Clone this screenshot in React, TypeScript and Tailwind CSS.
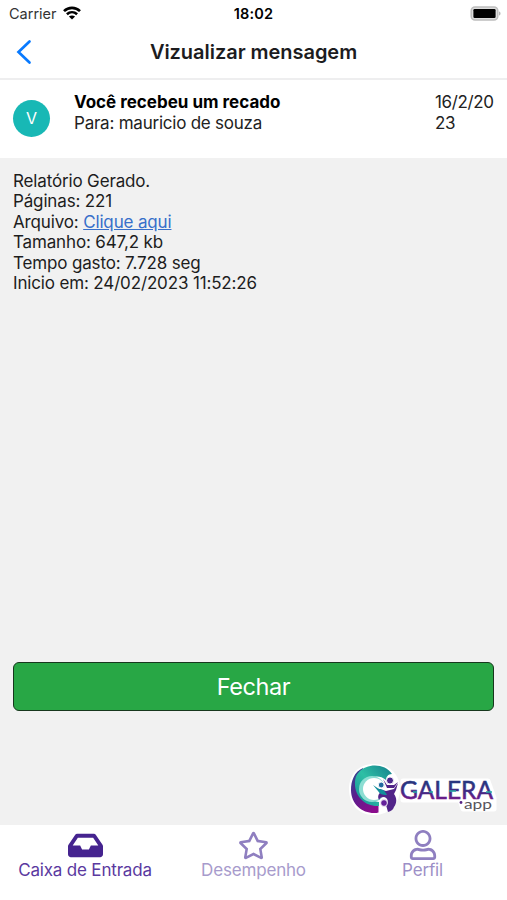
import { FaInbox, FaRegStar, FaRegUser } from "react-icons/fa";

function StatusBar() {
  return (
    <div className="grid h-[28px] shrink-0 grid-cols-3 items-center text-[14.5px] leading-none">
      <div className="flex items-center gap-[6px] pl-[9px]">
        <span className="text-[#333]">Carrier</span>
        <svg className="-mt-[2px]" width="18" height="14" viewBox="0 0 18 14" fill="none" stroke="#000" strokeWidth="2.6">
          <path d="M1 5.2C5.5.7 12.5.7 17 5.2" />
          <path d="M3.9 8.3c3-2.8 7.2-2.8 10.2 0" />
          <path d="M9 13.5 5.9 10.6c1.8-1.5 4.4-1.5 6.2 0z" fill="#000" stroke="none" />
        </svg>
      </div>
      <span className="text-center text-[14.5px] font-semibold tracking-[0.2px]">18:02</span>
      <div className="flex justify-end pr-[6px]">
        <svg className="-mt-[1px]" width="31" height="15" viewBox="0 0 31 15">
          <rect x="1.2" y="1" width="26.6" height="13" rx="3.8" fill="#ddd" stroke="#bdbdbd" strokeWidth="1.5" />
          <rect x="3.4" y="3" width="22.2" height="9" rx="1.2" fill="#000" />
          <path d="M29 5.5c2 .5 2 3.5 0 4z" fill="#b5b5b5" />
        </svg>
      </div>
    </div>
  );
}

function Logo() {
  return (
    <svg width="150" height="54" viewBox="0 0 150 54" aria-label="Galera app">
      <defs>
        <linearGradient id="ring" x1="1" y1="0" x2="0" y2="1">
          <stop offset="0" stopColor="#147f8c" />
          <stop offset="0.5" stopColor="#2ebfa5" />
          <stop offset="1" stopColor="#158f98" />
        </linearGradient>
        <linearGradient id="rim" x1="0" y1="0" x2="0.7" y2="1">
          <stop offset="0" stopColor="#28508f" />
          <stop offset="0.5" stopColor="#5d1d8e" />
          <stop offset="1" stopColor="#8a0c8c" />
        </linearGradient>
        <linearGradient id="word" x1="0" y1="0" x2="0" y2="1">
          <stop offset="0.3" stopColor="#29357f" />
          <stop offset="0.65" stopColor="#472786" />
          <stop offset="0.95" stopColor="#83158c" />
        </linearGradient>
      </defs>
      <path d="M25 0C41 0 51 11 51 25S41 51 25 51 0 40 0 25 10 0 25 0z" fill="#fff" />
      <g stroke="#fff" strokeWidth="5" strokeLinejoin="round" fill="#fff" className="font-['Lato',sans-serif]">
        <path d="M54 17h85l6 17v11h-31l-3-9H54z" />
      </g>
      <path d="M14 4C5 8 2 17 2 26c0 14 11 23 23 23 2 0 3 0 4.500-.5V38C18 38 10 28 12 16z" fill="url(#rim)" />
      <path d="M10 8C18-1 36-1 43 10c-4 0-6 3-6 6-8-7-19-3-21 6-1 9 5 15 14 16v4C16 43 5 32 6 18c0-4 1-7 4-10z" fill="url(#ring)" />
      <circle cx="23" cy="25" r="13" fill="#8cded3" />
      <circle cx="25" cy="25" r="11" fill="#fff" />
      <path d="M28.500 24.500 37 27l8-2 4-6-2 7-2 4c3 4 3 9 0 13-1 3-3 4-6 5l-2-7c3-3 2-7-2-8-3 0-4 1-5 3-2-4 0-7 3-9z" fill="#512489" />
      <path d="M24 21l6 4c4 0 6 2 8 6-5 0-7-1-9-4z" fill="#128f9b" />
      <path d="M34 15l4 6 7 0 4-3-4 6h-7z" fill="#512489" />
      <g stroke="#fff" strokeWidth="0.9">
        <circle cx="41" cy="16.500" r="3.500" fill="#4b298d" />
        <circle cx="32.200" cy="21" r="2.900" fill="#226aa0" />
        <circle cx="35" cy="39" r="3.400" fill="#64209a" />
      </g>
      <text x="51" y="34.500" fontSize="24.500" textLength="93" lengthAdjust="spacingAndGlyphs" fill="url(#word)" stroke="url(#word)" strokeWidth="0.55" className="font-['Lato',sans-serif]">GALERA</text>
      <path d="M80 28h4M100 27h7M137 28h6M64 28h4" stroke="#24aaa4" strokeWidth="1.5" />
      <circle cx="112" cy="38.500" r="1.400" fill="#572384" />
      <text x="115" y="44.500" fontSize="14" textLength="28" lengthAdjust="spacingAndGlyphs" fill="#57545c" className="font-['Lato',sans-serif]">app</text>
    </svg>
  );
}

const details = ["Tamanho: 647,2 kb", "Tempo gasto: 7.728 seg", "Inicio em: 24/02/2023 11:52:26"];

export default function App() {
  return (
    <div className="flex h-[900px] w-[507px] flex-col overflow-hidden bg-white font-['Inter',sans-serif] text-black">
      <StatusBar />
      <header className="grid h-[52px] shrink-0 grid-cols-[60px_1fr_60px] items-center border-b-2 border-[#eeeeef]">
        <svg className="-mt-[2px] ml-[16px]" width="16" height="26" viewBox="0 0 16 26" fill="none" stroke="#087aff" strokeWidth="2.7" strokeLinecap="round">
          <path d="M13.5 2.5 2.5 13l11 10.5" />
        </svg>
        <h1 className="-mt-[2px] text-center text-[20px] font-semibold leading-none tracking-[-0.04px] text-[#1c1c1e]">Vizualizar mensagem</h1>
      </header>
      <section className="flex h-[78px] shrink-0 pl-[13px] pt-[12px] text-[17px] leading-[20.5px]">
        <div className="mt-[8px] flex size-[37px] items-center justify-center rounded-full bg-[#18b8b5] text-[16px] text-white">V</div>
        <div className="ml-[24px] flex-1">
          <p className="font-bold">Você recebeu um recado</p>
          <p className="tracking-[-0.23px] text-[#222]">Para: mauricio de souza</p>
        </div>
        <p className="w-[72px] tracking-[-0.35px] text-[#222]">16/2/20<br />23</p>
      </section>
      <main className="flex flex-1 flex-col bg-[#f1f1f1] px-[13px] pt-[13px]">
        <div className="h-[491px] text-[17px] leading-[20.4px] tracking-[-0.15px] text-[#1d1d1d]">
          <p>Relatório Gerado.</p>
          <p>Páginas: 221</p>
          <p>Arquivo: <a className="text-[#376fca] underline" href="#">Clique aqui</a></p>
          {details.map((line) => <p key={line}>{line}</p>)}
        </div>
        <button className="h-[49px] w-full shrink-0 rounded-[6px] border-[1.5px] border-[#17371d] bg-[#28a745] text-[23.5px] leading-none tracking-[-0.4px] text-white">Fechar</button>
        <div className="-mr-[5px] mt-[53px] flex justify-end"><Logo /></div>
      </main>
      <nav className="grid h-[75px] shrink-0 grid-cols-3 pt-[5px] text-[17px] leading-[20px] tracking-[-0.18px]">
        <div className="flex flex-col items-center pl-[1px] text-[#5a39a0]">
          <span className="flex h-[30px] items-center"><FaInbox className="text-[#45238f]" size={35} /></span>
          <span>Caixa de Entrada</span>
        </div>
        <div className="flex flex-col items-center text-[#a79bcc]">
          <span className="flex h-[30px] items-center"><FaRegStar className="text-[#8f7fc0]" size={31} /></span>
          <span>Desempenho</span>
        </div>
        <div className="flex flex-col items-center text-[#9d8fc7]">
          <span className="flex h-[30px] items-center"><FaRegUser className="text-[#8f7fc0]" size={30} /></span>
          <span>Perfil</span>
        </div>
      </nav>
    </div>
  );
}
